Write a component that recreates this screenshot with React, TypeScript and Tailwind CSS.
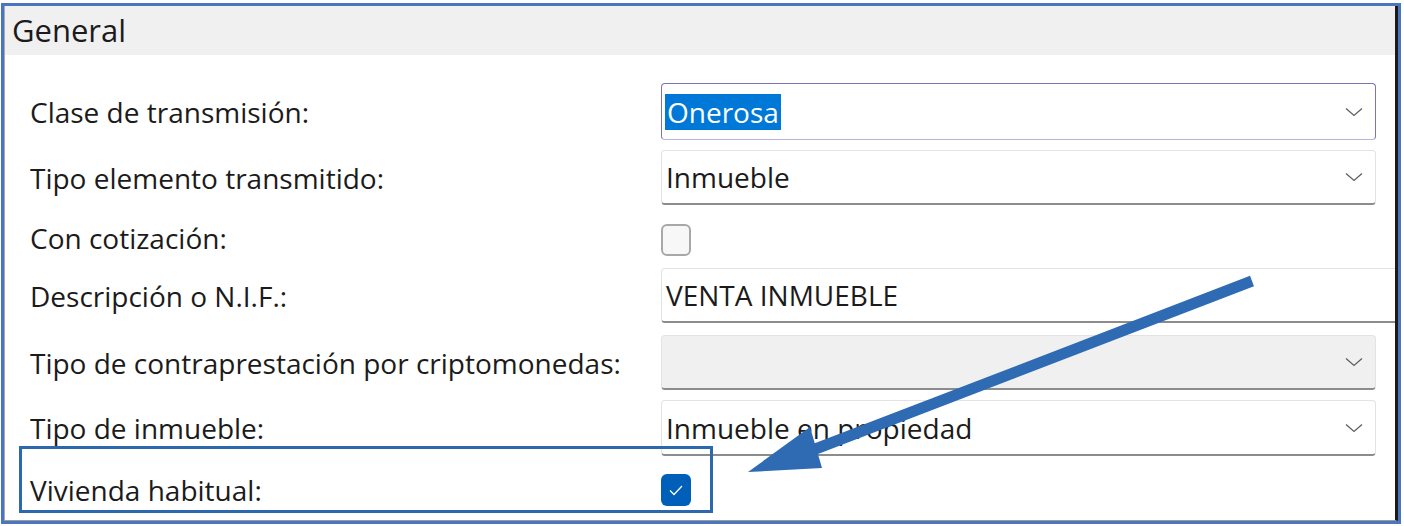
import React from "react";

const font = "font-['Open_Sans','Noto_Sans',sans-serif]";

function Chevron() {
  return (
    <svg width="18" height="10" viewBox="0 0 18 10" className="shrink-0">
      <path d="M1 1.5 L9 8.5 L17 1.5" fill="none" stroke="#5f5f5f" strokeWidth="1.3" />
    </svg>
  );
}

interface SelectProps {
  value?: string;
  focused?: boolean;
  disabled?: boolean;
  className?: string;
}

function Select({ value, focused, disabled, className = "" }: SelectProps) {
  const border = focused
    ? "border border-[#7d74b8] border-b-[#b9b2dc]"
    : "border border-[#e3e3e3] border-b-2 border-b-[#8c8c8c]";
  const bg = disabled ? "bg-[#f0f0f0]" : "bg-white";
  return (
    <div className={`flex w-[715px] items-center justify-between rounded-[4px] pl-[3px] pr-[12px] ${border} ${bg} ${className}`}>
      {focused ? (
        <span className="bg-[#0078d7] px-[2px] leading-[36px] text-white">{value}</span>
      ) : (
        <span className="pl-[1px] text-[#1b1b1b]">{value}</span>
      )}
      <Chevron />
    </div>
  );
}

function Checkbox({ checked }: { checked?: boolean }) {
  if (checked) {
    return (
      <div className="flex h-[32px] w-[30px] items-center justify-center rounded-[6px] bg-[#005fb8]">
        <svg width="18" height="16" viewBox="0 0 18 16">
          <path d="M3 8.5 L7 12.5 L15 4" fill="none" stroke="white" strokeWidth="1.3" />
        </svg>
      </div>
    );
  }
  return <div className="h-[32px] w-[30px] rounded-[6px] border-2 border-[#a8a8a8] bg-[#f7f7f7]" />;
}

function Row({ label, children, className = "" }: { label: string; children: React.ReactNode; className?: string }) {
  return (
    <div className={`flex items-center ${className}`}>
      <div className="w-[656px] shrink-0 pl-[25px] text-[#1b1b1b]">{label}</div>
      <div className="flex h-full items-center">{children}</div>
    </div>
  );
}

export default function App() {
  return (
    <div className={`relative h-[526px] w-[1404px] overflow-hidden bg-white pl-[1px] pt-[3px] ${font} text-[28px]`}>
      <div className="h-[521px] w-[1400px] border-[3px] border-[#4a76c0]">
        <div className="h-full w-full overflow-hidden border-l border-b border-r-[3px] border-l-[#a9a9a9] border-b-[#9a9a9a] border-r-[#1a1a1a]">
          <div className="flex h-[49px] items-center bg-[#f0f0f0] pl-[7px] text-[31px] text-[#1b1b1b]">General</div>

          <div className="flex flex-col pt-[28px]">
            <Row label="Clase de transmisión:" className="h-[57px]">
              <Select value="Onerosa" focused className="h-[57px]" />
            </Row>
            <Row label="Tipo elemento transmitido:" className="mt-[10px] h-[55px]">
              <Select value="Inmueble" className="h-[55px]" />
            </Row>
            <Row label="Con cotización:" className="mt-[8px] h-[49px]">
              <div className="pt-[4px]">
                <Checkbox />
              </div>
            </Row>
            <Row label="Descripción o N.I.F.:" className="mt-[6px] h-[55px]">
              <div className="flex h-[55px] w-[760px] items-center rounded-[4px] border border-[#e3e3e3] border-b-2 border-b-[#8c8c8c] bg-white pl-[4px] text-[#1b1b1b]">
                VENTA INMUEBLE
              </div>
            </Row>
            <Row label="Tipo de contraprestación por criptomonedas:" className="mt-[12px] h-[55px]">
              <Select disabled className="h-[55px]" />
            </Row>
            <Row label="Tipo de inmueble:" className="mt-[10px] h-[56px]">
              <Select value="Inmueble en propiedad" className="h-[56px]" />
            </Row>
            <Row label="Vivienda habitual:" className="mt-[10px] h-[48px]">
              <Checkbox checked />
            </Row>
          </div>
        </div>
      </div>

      {/* annotation: highlight box + arrow */}
      <div className="absolute left-[19px] top-[446px] h-[67px] w-[694px] border-[3px] border-[#2b68ad]" />
      <svg className="pointer-events-none absolute left-0 top-0" width="1404" height="526" viewBox="0 0 1404 526">
        <line x1="1252" y1="281" x2="805" y2="453" stroke="#2e6bb2" strokeWidth="11" />
        <polygon points="748,472 810,427 822,468" fill="#2e6bb2" />
      </svg>
    </div>
  );
}
